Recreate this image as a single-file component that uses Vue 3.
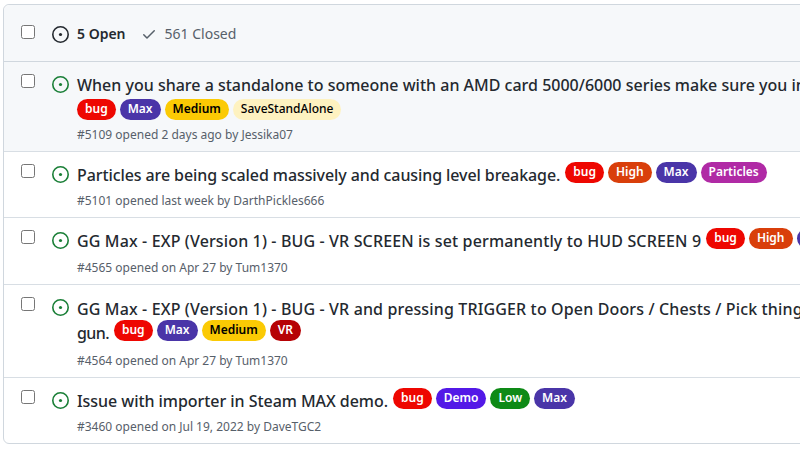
<script setup>
const colors = {
  bug: 'red',
  Max: 'max',
  Medium: 'medium',
  High: 'high',
  Low: 'low',
  Demo: 'demo',
  Particles: 'particles',
  VR: 'vr',
  SaveStandAlone: 'save'
}

// track: small per-title letter-spacing, the font here is not quite the original one
const issues = [
  {
    title: 'When you share a standalone to someone with an AMD card 5000/6000 series make sure you include the driver',
    labels: ['bug', 'Max', 'Medium', 'SaveStandAlone'],
    labelsBelow: true,
    meta: '#5109 opened 2 days ago by Jessika07',
    unread: true,
    track: 0
  },
  {
    title: 'Particles are being scaled massively and causing level breakage.',
    labels: ['bug', 'High', 'Max', 'Particles'],
    meta: '#5101 opened last week by DarthPickles666',
    track: -0.09
  },
  {
    title: 'GG Max - EXP (Version 1) - BUG - VR SCREEN is set permanently to HUD SCREEN 9',
    labels: ['bug', 'High', 'Max'],
    meta: '#4565 opened on Apr 27 by Tum1370',
    track: 0.14
  },
  {
    title: 'GG Max - EXP (Version 1) - BUG - VR and pressing TRIGGER to Open Doors / Chests / Pick things up fires the',
    title2: 'gun.',
    labels: ['bug', 'Max', 'Medium', 'VR'],
    meta: '#4564 opened on Apr 27 by Tum1370',
    track: 0.14
  },
  {
    title: 'Issue with importer in Steam MAX demo.',
    labels: ['bug', 'Demo', 'Low', 'Max'],
    meta: '#3460 opened on Jul 19, 2022 by DaveTGC2',
    track: -0.05
  }
]
</script>

<template>
  <div class="page">
    <div class="box">
      <div class="box-header">
        <span class="check"></span>
        <svg class="icon open-dark" viewBox="0 0 16 16" width="17" height="17">
          <path d="M8 9.5a1.5 1.5 0 1 0 0-3 1.5 1.5 0 0 0 0 3Z" />
          <path d="M8 0a8 8 0 1 1 0 16A8 8 0 0 1 8 0ZM1.5 8a6.5 6.5 0 1 0 13 0 6.5 6.5 0 0 0-13 0Z" />
        </svg>
        <span class="open-count">5 Open</span>
        <svg class="icon tick" viewBox="0 0 16 16" width="16" height="16">
          <path d="M13.78 4.22a.75.75 0 0 1 0 1.06l-7.25 7.25a.75.75 0 0 1-1.06 0L2.22 9.28a.751.751 0 0 1 1.06-1.06L6 10.94l6.72-6.72a.75.75 0 0 1 1.06 0Z" />
        </svg>
        <span class="closed-count">561 Closed</span>
      </div>

      <div v-for="issue in issues" :key="issue.meta" class="row" :class="{ unread: issue.unread, wraps: issue.title2 }">
        <span class="check"></span>
        <svg class="icon open-green" viewBox="0 0 16 16" width="17" height="17">
          <path d="M8 9.5a1.5 1.5 0 1 0 0-3 1.5 1.5 0 0 0 0 3Z" />
          <path d="M8 0a8 8 0 1 1 0 16A8 8 0 0 1 8 0ZM1.5 8a6.5 6.5 0 1 0 13 0 6.5 6.5 0 0 0-13 0Z" />
        </svg>
        <div class="body">
          <div class="title-line">
            <span class="title" :style="{ letterSpacing: issue.track + 'px' }">{{ issue.title }}</span>
            <span v-if="!issue.labelsBelow && !issue.title2" class="labels">
              <span v-for="l in issue.labels" :key="l" class="label" :class="colors[l]">{{ l }}</span>
            </span>
          </div>
          <div v-if="issue.labelsBelow" class="labels-row">
            <span v-for="l in issue.labels" :key="l" class="label" :class="colors[l]">{{ l }}</span>
          </div>
          <div v-if="issue.title2" class="title-line second">
            <span class="title">{{ issue.title2 }}</span>
            <span class="labels">
              <span v-for="l in issue.labels" :key="l" class="label" :class="colors[l]">{{ l }}</span>
            </span>
          </div>
          <div class="meta">{{ issue.meta }}</div>
        </div>
      </div>
    </div>
  </div>
</template>

<style>
html,
body {
  margin: 0;
  background: #fff;
  overflow: hidden;
}
</style>

<style scoped>
.page {
  width: 800px;
  height: 450px;
  overflow: hidden;
  padding: 4px 0 0 3px;
  box-sizing: border-box;
  font-family: "Noto Sans", "Open Sans", sans-serif;
  color: #24292f;
}

.box {
  width: 1100px;
  border: 1px solid #d0d7de;
  border-radius: 6px;
  box-sizing: border-box;
}

.box-header {
  height: 57px;
  box-sizing: border-box;
  background: #f6f8fa;
  border-bottom: 1px solid #d0d7de;
  border-radius: 6px 6px 0 0;
  padding-left: 17px;
  display: flex;
  align-items: center;
}

.check {
  width: 12px;
  height: 12px;
  flex: none;
  border: 1px solid #767676;
  border-radius: 2.5px;
  background: #fff;
}

.box-header .check {
  margin-top: -2px;
}

.icon {
  flex: none;
  fill: currentColor;
}

.open-dark {
  margin: 2px 0 0 17px;
  color: #24292f;
}

.open-count {
  margin-left: 8px;
  font-size: 14px;
  font-weight: 600;
}

.tick {
  margin: 1px 0 0 15px;
  color: #57606a;
}

.closed-count {
  margin-left: 8px;
  font-size: 14px;
  color: #57606a;
}

.row {
  display: flex;
  align-items: flex-start;
  padding: 8px 0 7px 17px;
  border-bottom: 1px solid #d8dee4;
}

.row:last-child {
  border-bottom: none;
}

.row.unread {
  background: #f6f8fa;
}

.row .check {
  margin-top: 4px;
}

.open-green {
  margin: 6px 0 0 17px;
  color: #1a7f37;
}

.body {
  margin-left: 8px;
  white-space: nowrap;
}

.title-line {
  display: flex;
  align-items: flex-start;
  height: 27.4px;
  box-sizing: border-box;
  padding-top: 3px;
}

.unread .title-line {
  height: 27px;
}

.wraps .title-line:first-child {
  padding-top: 4px;
}

.title-line.second {
  height: 25.5px;
  padding-top: 0;
}

.second .title {
  margin-top: 1px;
  letter-spacing: -0.6px;
}

.title {
  font-size: 16px;
  font-weight: 500;
  line-height: 24px;
}

.labels {
  display: inline-flex;
  gap: 4px;
  margin: -1px 0 0 5px;
}

.second .labels {
  margin-top: 0;
}

.labels-row {
  display: flex;
  gap: 4px;
  height: 21px;
  margin-top: 2px;
}

.unread .meta {
  margin-top: 6px;
}

.wraps .meta {
  margin-top: 6px;
}

.label {
  height: 21px;
  line-height: 20px;
  padding: 0 8px;
  border-radius: 11px;
  font-size: 12px;
  font-weight: 600;
  color: #fff;
  box-sizing: border-box;
}

.red { background: #ee0701; }
.max { background: #4a35a8; }
.medium { background: #fbca04; color: #000; }
.high { background: #d93f0b; }
.low { background: #0e8a16; }
.demo { background: #5319e7; }
.particles { background: #b02aa5; }
.vr { background: #b60205; }
.save { background: #fef2c0; color: #000; font-weight: 500; }

.meta {
  margin-top: 5px;
  font-size: 12px;
  line-height: 18px;
  color: #57606a;
}
</style>
